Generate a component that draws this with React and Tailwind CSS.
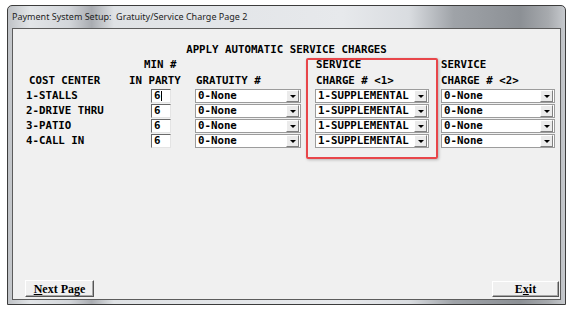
const mono = "font-['DejaVu_Sans_Mono',monospace] font-bold text-[10.75px] text-black";

const costCenters = ["1-STALLS", "2-DRIVE THRU", "3-PATIO", "4-CALL IN"];

const Combo = ({ value, width }) => (
  <div className={`flex h-[14px] items-center border border-[#9c9c9c] bg-white ${width}`}>
    <span className="flex-1 overflow-hidden whitespace-pre pl-[2px] leading-[12px]">{value}</span>
    <span className="mr-px flex h-[12px] w-[13px] shrink-0 items-center justify-center border border-t-white border-l-white border-r-[#808080] border-b-[#808080] bg-[#ebebeb]">
      <svg width="6" height="3" viewBox="0 0 6 3">
        <path d="M0 0h6L3 3z" fill="#000" />
      </svg>
    </span>
  </div>
);

const PartyInput = ({ value, caret }) => (
  <div className="ml-[22px] flex h-[14px] w-[20px] items-center border border-t-[#6a6a6a] border-l-[#6a6a6a] border-r-[#e4e4e4] border-b-[#e4e4e4] bg-white pl-[2px] leading-[12px]">
    {value}
    {caret && <span className="ml-px h-[10px] w-px bg-black" />}
  </div>
);

const WinButton = ({ children, width, height }) => (
  <button
    className={`flex items-center justify-center border border-t-white border-l-white border-r-[#555] border-b-[#555] bg-[#f0f0f0] shadow-[inset_-1px_-1px_0_#a8a8a8] font-['Liberation_Serif',serif] text-[12px] font-bold leading-none whitespace-pre text-black ${width} ${height}`}
  >
    {children}
  </button>
);

export default function App() {
  return (
    <div className="relative h-[309px] w-[574px] overflow-hidden bg-white">
      {/* window frame */}
      <div className="ml-[7px] mt-[5px] flex h-[300px] w-[559px] flex-col rounded-t-[5px] border border-[#3c3c3c] bg-[linear-gradient(90deg,#bfc2c6_0%,#e2e5e8_4%,#d3d6da_11%,#a9acb1_15%,#dfe2e5_19%,#e7e9ec_60%,#d9dce0_72%,#9fa3a8_80%,#8c9095_92%,#a7aaae_97%,#c6c9cd_100%)]">
        <div className="flex h-[22px] items-center pl-[4px] font-['Noto_Sans',sans-serif] text-[9px] whitespace-pre text-[#1e1e1e]">
          Payment System Setup:  Gratuity/Service Charge Page 2
        </div>

        {/* client area */}
        <div className={`mx-[4px] mb-[4px] flex flex-1 flex-col border border-[#5c5c5c] bg-[#f0f0f0] ${mono}`}>
          <div className="mt-[14px] h-[14px] text-center leading-[14px]">APPLY AUTOMATIC SERVICE CHARGES</div>

          <div className="grid grid-cols-[103px_66px_120px_126px_114px] pl-[13px]">
            <div className="h-[16px]" />
            <div className="h-[16px] pl-[15px] leading-[16px]">MIN #</div>
            <div className="h-[16px]" />
            <div className="h-[16px] pl-px leading-[16px]">SERVICE</div>
            <div className="h-[16px] leading-[16px]">SERVICE</div>

            <div className="h-[16px] pl-[3px] leading-[16px]">COST CENTER</div>
            <div className="h-[16px] leading-[16px]">IN PARTY</div>
            <div className="h-[16px] pl-px leading-[16px]">GRATUITY #</div>
            <div className="h-[16px] pl-px leading-[16px]">CHARGE # &lt;1&gt;</div>
            <div className="h-[16px] leading-[16px]">CHARGE # &lt;2&gt;</div>

            {costCenters.map((name, i) => (
              <div key={name} className="contents">
                <div className="h-[15px] leading-[14px]">{name}</div>
                <div className="h-[15px]">
                  <PartyInput value="6" caret={i === 0} />
                </div>
                <div className="h-[15px]">
                  <Combo value="0-None" width="w-[106px]" />
                </div>
                <div className="h-[15px]">
                  <Combo value="1-SUPPLEMENTAL" width="w-[114px]" />
                </div>
                <div className="h-[15px]">
                  <Combo value="0-None" width="w-[114px]" />
                </div>
              </div>
            ))}
          </div>

          <div className="mt-auto mb-[2px] flex items-end justify-between pl-[12px] pr-px">
            <WinButton width="w-[69px]" height="h-[17px]">
              <span className="underline">N</span>ext Page
            </WinButton>
            <WinButton width="w-[67px]" height="h-[16px]">
              E<span className="underline">x</span>it
            </WinButton>
          </div>
        </div>
      </div>

      {/* annotation highlight */}
      <div className="absolute left-[306px] top-[58px] h-[101px] w-[132px] rounded-[2px] border-2 border-[#e8464a] shadow-[1px_1px_3px_rgba(0,0,0,0.25)]" />
    </div>
  );
}
